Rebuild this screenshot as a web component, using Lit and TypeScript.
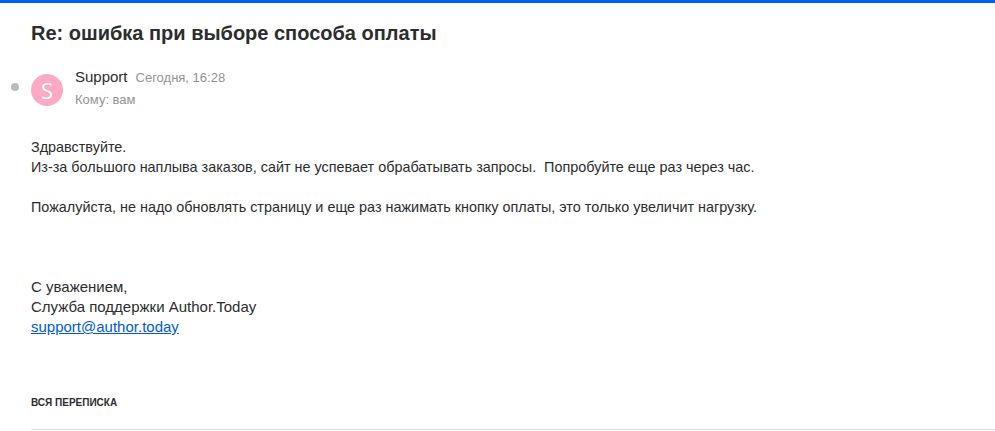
import { LitElement, html, css } from "lit";
import { customElement } from "lit/decorators.js";

@customElement("app-root")
export class AppRoot extends LitElement {
  static styles = css`
    :host {
      display: block;
      height: 431px;
      overflow: hidden;
      background: #fff;
      border-top: 3px solid #005ff9;
      box-sizing: border-box;
      font-family: "Liberation Sans", Arial, sans-serif;
      color: #2c2d2e;
    }
    .page {
      padding: 0 0 0 31px;
    }
    .subject {
      margin: 0;
      padding-top: 17px;
      font-size: 20px;
      line-height: 26px;
      font-weight: 700;
    }
    .head {
      display: flex;
      align-items: center;
      margin-top: 20px;
      position: relative;
    }
    .dot {
      position: absolute;
      left: -20px;
      top: 17px;
      width: 8px;
      height: 8px;
      border-radius: 50%;
      background: #b9bbbd;
    }
    .avatar {
      width: 32px;
      height: 32px;
      border-radius: 50%;
      background: #ffa9c4;
      color: #fff;
      font-family: "Open Sans", sans-serif;
      font-size: 22px;
      line-height: 32px;
      text-align: center;
      margin: 2px 12px 0 0;
    }
    .from {
      font-size: 15px;
      line-height: 22px;
    }
    .date {
      font-size: 13px;
      color: #919399;
      margin-left: 8px;
    }
    .to {
      font-size: 13px;
      line-height: 22px;
      color: #919399;
    }
    .body {
      margin-top: 26px;
      font-size: 14.4px;
      line-height: 20px;
    }
    .sign {
      margin-top: 60px;
      font-size: 15px;
    }
    a {
      color: #005bd1;
    }
    .all {
      margin-top: 60px;
      font-size: 10px;
      font-weight: 700;
      line-height: 12px;
    }
    hr {
      margin: 20px 0 0;
      border: 0;
      border-top: 1px solid #e0e1e3;
    }
  `;

  render() {
    return html`
      <div class="page">
        <h1 class="subject">Re: ошибка при выборе способа оплаты</h1>
        <div class="head">
          <span class="dot"></span>
          <div class="avatar">S</div>
          <div>
            <div class="from">Support<span class="date">Сегодня, 16:28</span></div>
            <div class="to">Кому: вам</div>
          </div>
        </div>
        <div class="body">
          <div>Здравствуйте.</div>
          <div>Из-за большого наплыва заказов, сайт не успевает обрабатывать запросы.&nbsp; Попробуйте еще раз через час.</div>
          <div><br /></div>
          <div>Пожалуйста, не надо обновлять страницу и еще раз нажимать кнопку оплаты, это только увеличит нагрузку.</div>
          <div class="sign">С уважением,<br />Служба поддержки Author.Today<br /><a href="#">support@author.today</a></div>
        </div>
        <div class="all">ВСЯ ПЕРЕПИСКА</div>
        <hr />
      </div>
    `;
  }
}
